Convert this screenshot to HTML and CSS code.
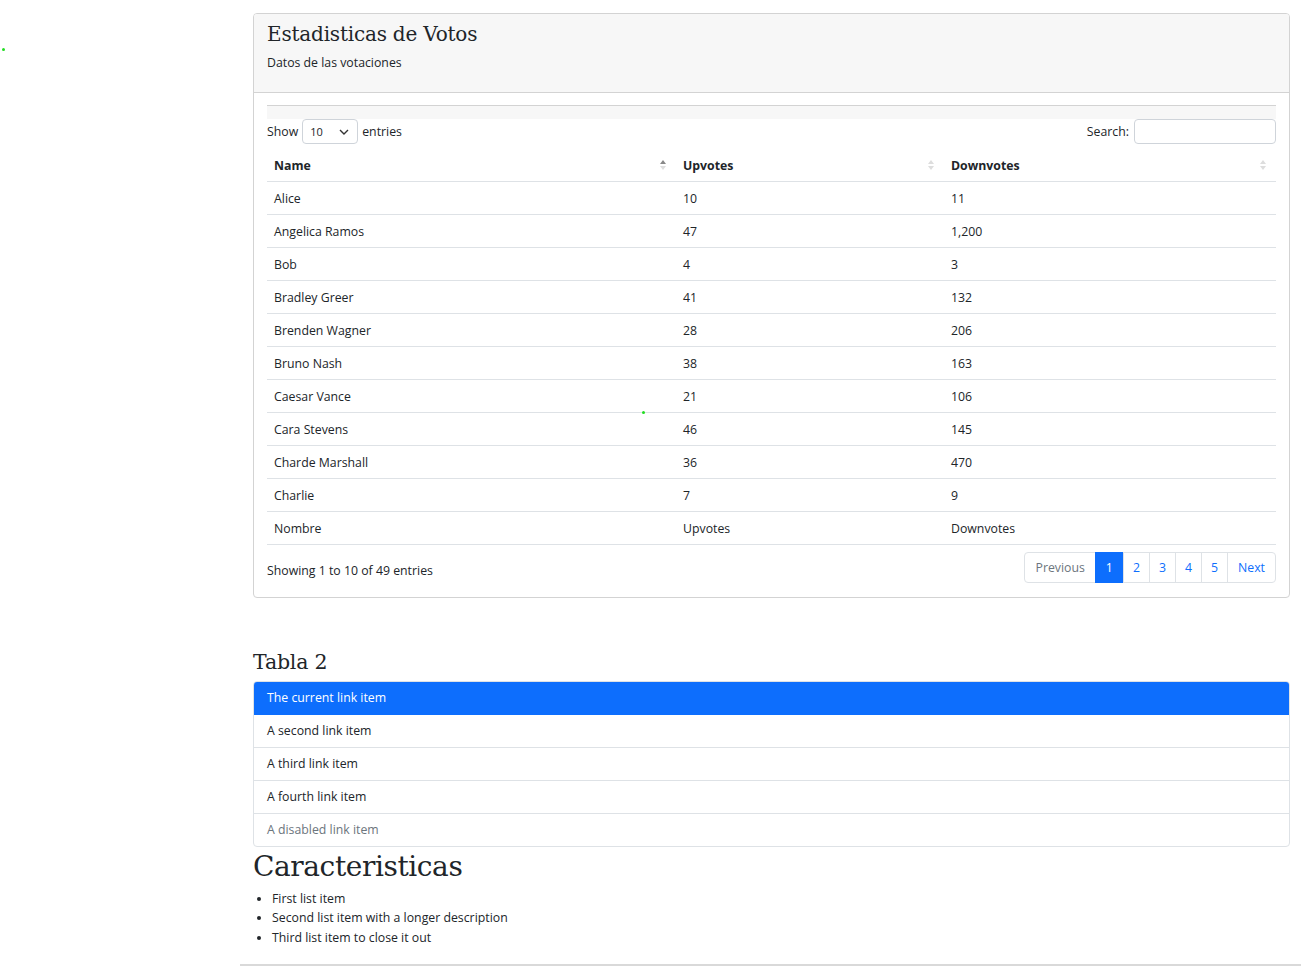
FILE: index.html
```html
<!DOCTYPE html>
<html lang="es">
<head>
<meta charset="utf-8">
<title>Estadisticas</title>
<link rel="stylesheet" href="styles.css">
</head>
<body>
<span class="dot dot-a"></span>
<span class="dot dot-b"></span>
<main class="container">
  <section class="card">
    <header class="card-header">
      <h1 class="card-title">Estadisticas de Votos</h1>
      <p class="card-sub">Datos de las votaciones</p>
    </header>
    <div class="card-body">
      <div class="band"></div>
      <div class="dt-top">
        <label class="dt-length">Show
          <span class="select">10
            <svg width="10" height="6" viewBox="0 0 10 6"><path d="M1 1l4 4 4-4" fill="none" stroke="#333" stroke-width="1.4"/></svg>
          </span>
          entries</label>
        <label class="dt-search">Search: <span class="search-input"></span></label>
      </div>
      <table class="dt">
        <colgroup><col class="c1"><col class="c2"><col class="c3"></colgroup>
        <thead>
          <tr>
            <th>Name<span class="sort"><i class="up on"></i><i class="down"></i></span></th>
            <th>Upvotes<span class="sort"><i class="up"></i><i class="down"></i></span></th>
            <th>Downvotes<span class="sort"><i class="up"></i><i class="down"></i></span></th>
          </tr>
        </thead>
        <tbody>
          <tr><td>Alice</td><td>10</td><td>11</td></tr>
          <tr><td>Angelica Ramos</td><td>47</td><td>1,200</td></tr>
          <tr><td>Bob</td><td>4</td><td>3</td></tr>
          <tr><td>Bradley Greer</td><td>41</td><td>132</td></tr>
          <tr><td>Brenden Wagner</td><td>28</td><td>206</td></tr>
          <tr><td>Bruno Nash</td><td>38</td><td>163</td></tr>
          <tr><td>Caesar Vance</td><td>21</td><td>106</td></tr>
          <tr><td>Cara Stevens</td><td>46</td><td>145</td></tr>
          <tr><td>Charde Marshall</td><td>36</td><td>470</td></tr>
          <tr><td>Charlie</td><td>7</td><td>9</td></tr>
        </tbody>
        <tfoot>
          <tr><td>Nombre</td><td>Upvotes</td><td>Downvotes</td></tr>
        </tfoot>
      </table>
      <div class="dt-bottom">
        <div class="dt-info">Showing 1 to 10 of 49 entries</div>
        <ul class="pagination">
          <li class="page disabled">Previous</li>
          <li class="page active">1</li>
          <li class="page">2</li>
          <li class="page">3</li>
          <li class="page">4</li>
          <li class="page">5</li>
          <li class="page">Next</li>
        </ul>
      </div>
    </div>
  </section>

  <h2 class="h-tabla">Tabla 2</h2>
  <div class="list-group">
    <a class="lg-item active">The current link item</a>
    <a class="lg-item">A second link item</a>
    <a class="lg-item">A third link item</a>
    <a class="lg-item">A fourth link item</a>
    <a class="lg-item disabled">A disabled link item</a>
  </div>

  <h2 class="h-carac">Caracteristicas</h2>
  <ul class="features">
    <li>First list item</li>
    <li>Second list item with a longer description</li>
    <li>Third list item to close it out</li>
  </ul>
</main>
<div class="bottom-rule"></div>
</body>
</html>
```
FILE: styles.css
```css
* { box-sizing: border-box; }
html, body { margin: 0; padding: 0; }
body {
  font-family: "Open Sans", "Noto Sans", sans-serif;
  font-size: 12.3px;
  color: #212529;
  background: #fff;
  position: relative;
  min-height: 966px;
}
.dot { position: absolute; width: 3px; height: 3px; background: #22dd22; border-radius: 50%; }
.dot-a { left: 2px; top: 48px; }
.dot-b { left: 642px; top: 411px; }

.container { width: 1037px; margin-left: 253px; padding-top: 13px; }

.card { border: 1px solid #d3d3d3; border-radius: 4px; overflow: hidden; }
.card-header { background: #f7f7f7; border-bottom: 1px solid #d3d3d3; padding: 7px 13px 20px; }
.card-title { font-family: "DejaVu Serif", Georgia, serif; font-weight: 400; font-size: 20px; margin: 0; line-height: 26px; color: #212529; letter-spacing: -0.2px; }
.card-sub { margin: 7px 0 0; line-height: 18px; }
.card-body { padding: 12px 13px 0; }
.band { height: 14px; border-top: 1px solid #d3d3d3; background: #f7f7f7; }

.dt-top { display: flex; justify-content: space-between; align-items: center; height: 25px; }
.dt-length, .dt-search { display: flex; align-items: center; gap: 4px; }
.select { display: inline-flex; align-items: center; justify-content: space-between; width: 56px; height: 25px; border: 1px solid #cfd4da; border-radius: 4px; padding: 0 8px 0 7px; font-size: 11px; }
.search-input { display: inline-block; width: 142px; height: 25px; border: 1px solid #cfd4da; border-radius: 4px; margin-left: 1px; }

.dt { width: 100%; border-collapse: collapse; margin-top: 7px; }
.c1 { width: 409px; } .c2 { width: 268px; }
.dt th, .dt td { text-align: left; padding: 2px 7px 0; height: 33px; border-bottom: 1px solid #dee2e6; }
.dt th { font-weight: 700; position: relative; height: 30px; padding-top: 0; }
.sort { position: absolute; right: 10px; top: 9px; display: flex; flex-direction: column; gap: 2px; }
.sort i { width: 0; height: 0; border-left: 3px solid transparent; border-right: 3px solid transparent; }
.sort .up { border-bottom: 4px solid #ddd; }
.sort .down { border-top: 4px solid #ddd; }
.sort .up.on { border-bottom-color: #888; }

.dt-bottom { display: flex; justify-content: space-between; align-items: center; padding: 7px 0 14px; }
.dt-info { padding-top: 6px; }
.pagination { display: flex; list-style: none; margin: 0; padding: 0; }
.page { height: 31px; line-height: 29px; padding: 0 9px; border: 1px solid #dee2e6; margin-left: -1px; color: #0d6efd; }
.page:first-child { border-radius: 4px 0 0 4px; margin-left: 0; padding: 0 10px; }
.page:last-child { border-radius: 0 4px 4px 0; padding: 0 10px; }
.page.disabled { color: #6c757d; }
.page.active { background: #0d6efd; border-color: #0d6efd; color: #fff; padding: 0 10px; }

.h-tabla { font-family: "DejaVu Serif", Georgia, serif; font-weight: 400; font-size: 20.5px; line-height: 26px; margin: 51px 0 0; letter-spacing: -0.2px; }
.list-group { margin-top: 6px; border: 1px solid #dee2e6; border-radius: 4px; overflow: hidden; }
.lg-item { display: block; height: 33px; line-height: 32px; padding: 0 13px; border-bottom: 1px solid #dee2e6; color: #212529; }
.lg-item:last-child { border-bottom: 0; height: 32px; }
.lg-item.active { background: #0d6efd; color: #fff; border-bottom-color: #0d6efd; }
.lg-item.disabled { color: #6c757d; }

.h-carac { font-family: "DejaVu Serif", Georgia, serif; font-weight: 400; font-size: 28px; line-height: 38px; margin: 1px 0 0; letter-spacing: -0.4px; }
.features { margin: 3px 0 0; padding-left: 19px; line-height: 19.5px; }

.bottom-rule { position: absolute; left: 240px; right: 0; top: 964px; height: 2px; background: #d9d9d9; }
```
